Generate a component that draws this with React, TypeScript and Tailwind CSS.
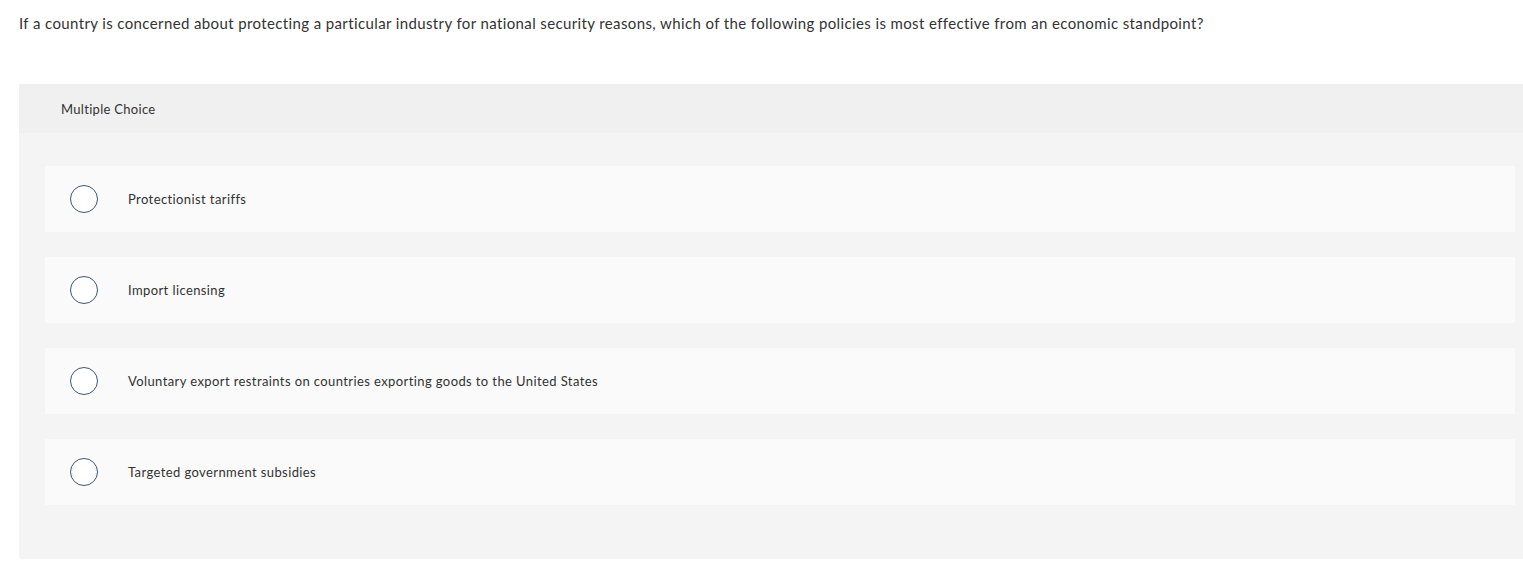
import { FC } from "react";

const options = [
  "Protectionist tariffs",
  "Import licensing",
  "Voluntary export restraints on countries exporting goods to the United States",
  "Targeted government subsidies",
];

const App: FC = () => {
  return (
    <div className="min-h-[566px] bg-white pl-[19px] pt-[13px] font-['Lato',sans-serif] text-[#333]">
      <p className="text-[15px] leading-[20px] tracking-[0.38px]">
        If a country is concerned about protecting a particular industry for national security reasons, which of the following policies is most effective from an economic standpoint?
      </p>

      <div className="mt-[51px] h-[475px] rounded-bl-[3px] bg-[#f4f4f4]">
        {/* header */}
        <div className="flex h-[49px] items-center bg-[#f0f0f0] pl-[42px] pt-[2px] text-[13px] tracking-[0.3px] text-[#333]">
          Multiple Choice
        </div>

        {/* options */}
        <div className="flex flex-col gap-[25px] pl-[26px] pr-[8px] pt-[33px]">
          {options.map((opt) => (
            <div key={opt} className="flex h-[66px] items-center bg-[#fafafa]">
              <span className="ml-[25px] h-[28px] w-[28px] shrink-0 rounded-full border-[1.5px] border-[#3d566e] bg-white" />
              <span className="ml-[30px] pt-[2px] text-[13px] tracking-[0.4px] text-[#333]">{opt}</span>
            </div>
          ))}
        </div>
      </div>
    </div>
  );
};

export default App;
